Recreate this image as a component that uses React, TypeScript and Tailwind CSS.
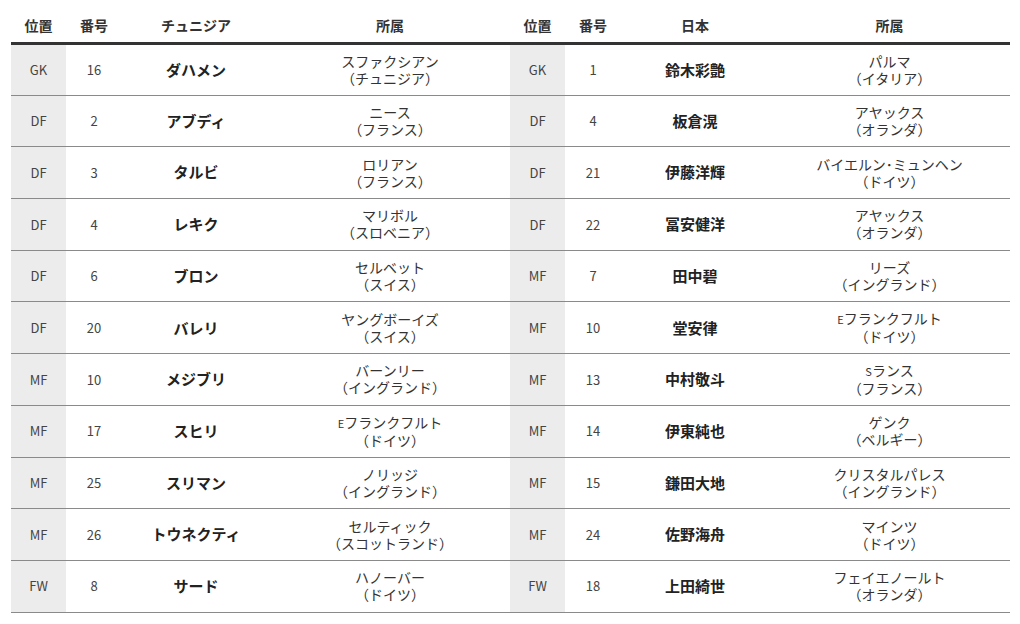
import React from 'react';

type Row = { pos: string; no: string; name: string; club: React.ReactNode; country: string };

const tunisia: Row[] = [
  { pos: 'GK', no: '16', name: 'ダハメン', club: 'スファクシアン', country: '（チュニジア）' },
  { pos: 'DF', no: '2', name: 'アブディ', club: 'ニース', country: '（フランス）' },
  { pos: 'DF', no: '3', name: 'タルビ', club: 'ロリアン', country: '（フランス）' },
  { pos: 'DF', no: '4', name: 'レキク', club: 'マリボル', country: '（スロベニア）' },
  { pos: 'DF', no: '6', name: 'ブロン', club: 'セルベット', country: '（スイス）' },
  { pos: 'DF', no: '20', name: 'バレリ', club: 'ヤングボーイズ', country: '（スイス）' },
  { pos: 'MF', no: '10', name: 'メジブリ', club: 'バーンリー', country: '（イングランド）' },
  { pos: 'MF', no: '17', name: 'スヒリ', club: <><span className="text-[11px]">E</span>フランクフルト</>, country: '（ドイツ）' },
  { pos: 'MF', no: '25', name: 'スリマン', club: 'ノリッジ', country: '（イングランド）' },
  { pos: 'MF', no: '26', name: 'トウネクティ', club: 'セルティック', country: '（スコットランド）' },
  { pos: 'FW', no: '8', name: 'サード', club: 'ハノーバー', country: '（ドイツ）' },
];

const japan: Row[] = [
  { pos: 'GK', no: '1', name: '鈴木彩艶', club: 'パルマ', country: '（イタリア）' },
  { pos: 'DF', no: '4', name: '板倉滉', club: 'アヤックス', country: '（オランダ）' },
  { pos: 'DF', no: '21', name: '伊藤洋輝', club: 'バイエルン･ミュンヘン', country: '（ドイツ）' },
  { pos: 'DF', no: '22', name: '冨安健洋', club: 'アヤックス', country: '（オランダ）' },
  { pos: 'MF', no: '7', name: '田中碧', club: 'リーズ', country: '（イングランド）' },
  { pos: 'MF', no: '10', name: '堂安律', club: <><span className="text-[11px]">E</span>フランクフルト</>, country: '（ドイツ）' },
  { pos: 'MF', no: '13', name: '中村敬斗', club: <><span className="text-[11px]">S</span>ランス</>, country: '（フランス）' },
  { pos: 'MF', no: '14', name: '伊東純也', club: 'ゲンク', country: '（ベルギー）' },
  { pos: 'MF', no: '15', name: '鎌田大地', club: 'クリスタルパレス', country: '（イングランド）' },
  { pos: 'MF', no: '24', name: '佐野海舟', club: 'マインツ', country: '（ドイツ）' },
  { pos: 'FW', no: '18', name: '上田綺世', club: 'フェイエノールト', country: '（オランダ）' },
];

function Squad({ team, rows, width }: { team: string; rows: Row[]; width: string }) {
  return (
    <table className={`${width} table-fixed border-collapse`}>
      <colgroup>
        <col className="w-[55px]" />
        <col className="w-[56px]" />
        <col className="w-[148px]" />
        <col />
      </colgroup>
      <thead>
        <tr className="border-b-[3px] border-[#333]">
          {['位置', '番号', team, '所属'].map((h) => (
            <th key={h} className="pt-[15px] pb-[7px] text-[14px] leading-[20px] font-bold text-[#333] text-center">
              {h}
            </th>
          ))}
        </tr>
      </thead>
      <tbody>
        {rows.map((r) => (
          <tr key={r.no + r.name} className="h-[51.7px] border-b border-[#8a8a8a]">
            <td className="bg-[#ececec] text-center text-[13px] text-[#444]">{r.pos}</td>
            <td className="text-center text-[13px] text-[#444]">{r.no}</td>
            <td className="text-center text-[15px] font-bold text-[#222]">{r.name}</td>
            <td className="text-center text-[14px] leading-[17px] text-[#333]">
              <div>{r.club}</div>
              <div>{r.country}</div>
            </td>
          </tr>
        ))}
      </tbody>
    </table>
  );
}

export default function App() {
  return (
    <div
      className="w-[1020px] h-[624px] bg-white pl-[11px] flex items-start overflow-hidden"
      style={{ fontFamily: '"Noto Sans CJK JP", "Noto Sans", sans-serif' }}
    >
      <Squad team="チュニジア" rows={tunisia} width="w-[499px]" />
      <Squad team="日本" rows={japan} width="w-[500px]" />
    </div>
  );
}
